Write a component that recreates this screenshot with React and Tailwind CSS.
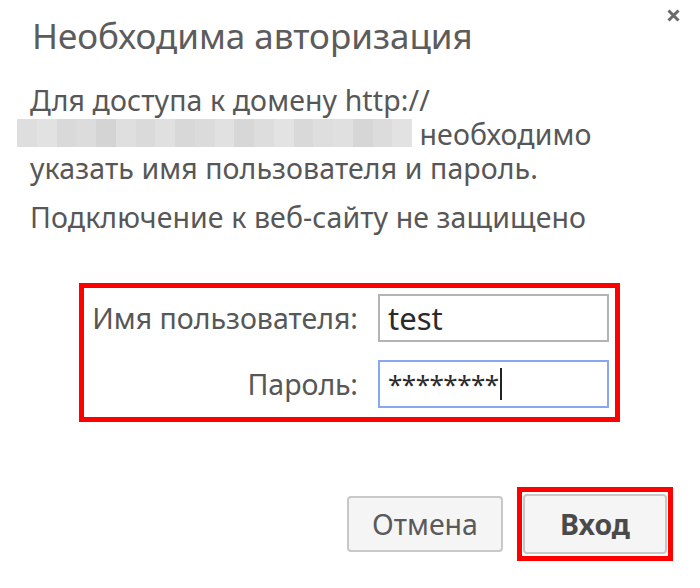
import React from "react";

const blurShades = [
  "#dedede", "#e2e2e2", "#d9d9d9", "#dcdcdc", "#d4d4d4", "#dfdfdf", "#dadada",
  "#e0e0e0", "#d8d8d8", "#dbdbdb", "#e1e1e1", "#d7d7d7", "#dddddd", "#e3e3e3",
  "#d9d9d9", "#dedede", "#e0e0e0", "#d6d6d6", "#dcdcdc", "#e2e2e2",
];

const BlurredDomain = () => (
  <span className="inline-flex align-top -ml-[13px] w-[395px] h-[28px] mt-[2px]">
    {blurShades.map((c, i) => (
      <span key={i} className="flex-1 h-full" style={{ backgroundColor: c }} />
    ))}
  </span>
);

export default function App() {
  return (
    <div className="relative w-[700px] h-[588px] bg-white text-[#575757] font-['Noto_Sans',sans-serif] overflow-hidden">
      {/* close */}
      <button className="absolute top-[9px] left-[667px] w-[13px] h-[13px]" aria-label="close">
        <svg viewBox="0 0 13 13" width="13" height="13">
          <path d="M1.5 1.5 L11.5 11.5 M11.5 1.5 L1.5 11.5" stroke="#6a6a6a" strokeWidth="3" />
        </svg>
      </button>

      <h1 className="pl-[32px] pt-[12px] text-[35px] leading-[48px] text-[#5c5c5c] font-normal">
        Необходима авторизация
      </h1>

      <div className="pl-[30px] pr-[10px] pt-[23px] text-[28.5px] leading-[34px] tracking-[0.1px]">
        <p>
          Для доступа к домену http://
          <br />
          <BlurredDomain /> необходимо
          <br />
          указать имя пользователя и пароль.
        </p>
        <p className="mt-[15px]">Подключение к веб-сайту не защищено</p>
      </div>

      {/* credentials */}
      <div className="ml-[79px] mt-[49px] w-[541px] border-[5px] border-[#ff0000] pt-[6px] pr-[6px] pb-[9px] grid grid-cols-[1fr_231px] gap-x-[20px] gap-y-[18px] items-center">
        <label className="text-right text-[28.5px] leading-[35px]">Имя пользователя:</label>
        <div className="h-[48px] border-2 border-[#b4b4b4] bg-white px-[8px] flex items-center text-[31px] text-[#2a2a2a]">
          test
        </div>
        <label className="text-right text-[28.5px] leading-[35px]">Пароль:</label>
        <div className="h-[48px] border-2 border-[#86a8ef] bg-white px-[8px] flex items-center text-[26px] text-[#2a2a2a] tracking-[-0.5px]">
          ********
          <span className="ml-[1px] w-[2px] h-[32px] bg-[#222]" />
        </div>
      </div>

      {/* actions */}
      <div className="flex justify-end items-center gap-[14px] pr-[27px] mt-[65px]">
        <button className="w-[156px] h-[56px] rounded-[4px] border-2 border-[#c8c8c8] bg-[#f5f5f5] text-[28.5px] text-[#5a5a5a]">
          Отмена
        </button>
        <div className="border-[5px] border-[#ff0000] px-[1px] py-[2px]">
          <button className="w-[144px] h-[60px] rounded-[4px] border-2 border-[#c8c8c8] bg-[#f5f5f5] text-[28.5px] font-bold text-[#4a4a4a]">
            Вход
          </button>
        </div>
      </div>
    </div>
  );
}
